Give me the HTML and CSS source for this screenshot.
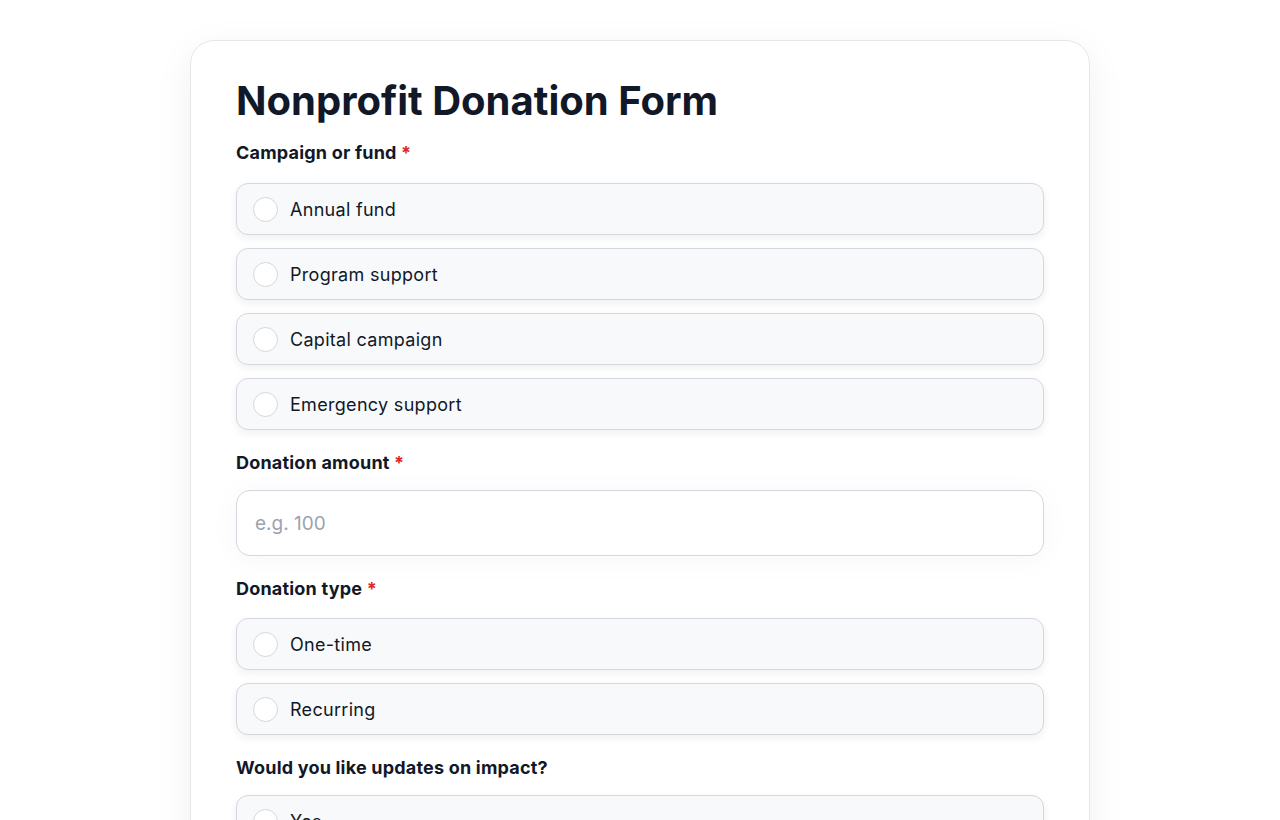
FILE: index.html
```html
<!DOCTYPE html>
<html lang="en">
<head>
  <meta charset="UTF-8" />
  <meta name="viewport" content="width=device-width, initial-scale=1.0"/>
  <title>Nonprofit Donation Form</title>
  <link rel="stylesheet" href="styles.css">
</head>
<body>
  <form class="card">
    <h1>Nonprofit Donation Form</h1>

    <div class="field">
      <div class="label">Campaign or fund <span class="req">*</span></div>
      <div class="options">
        <label class="option"><input type="radio" name="fund"><span>Annual fund</span></label>
        <label class="option"><input type="radio" name="fund"><span>Program support</span></label>
        <label class="option"><input type="radio" name="fund"><span>Capital campaign</span></label>
        <label class="option"><input type="radio" name="fund"><span>Emergency support</span></label>
      </div>
    </div>

    <div class="field">
      <label class="label label-input" for="amount">Donation amount <span class="req">*</span></label>
      <input class="text-input" id="amount" type="text" placeholder="e.g. 100">
    </div>

    <div class="field">
      <div class="label label-tight">Donation type <span class="req">*</span></div>
      <div class="options">
        <label class="option"><input type="radio" name="type"><span>One-time</span></label>
        <label class="option"><input type="radio" name="type"><span>Recurring</span></label>
      </div>
    </div>

    <div class="field">
      <div class="label label-input">Would you like updates on impact?</div>
      <div class="options">
        <label class="option"><input type="radio" name="updates"><span>Yes</span></label>
        <label class="option"><input type="radio" name="updates"><span>No</span></label>
      </div>
    </div>
  </form>
</body>
</html>
```

FILE: styles.css
```css
body {
  margin: 0;
  padding: 40px 0;
  background: #ffffff;
  font-family: Inter, "Noto Sans", sans-serif;
  color: #111827;
}

.card {
  width: 808px;
  margin: 0 auto;
  padding: 36px 45px 40px;
  background: #fff;
  border: 1px solid #e5e7eb;
  border-radius: 24px;
  box-shadow: 0 10px 40px rgba(15, 23, 42, 0.06);
}

h1 {
  margin: 0 0 16px;
  font-size: 40px;
  line-height: 48px;
  font-weight: 700;
  color: #111827;
}

.field {
  margin-bottom: 21px;
}

.label {
  display: block;
  margin-bottom: 18px;
  font-size: 18px;
  line-height: 24px;
  font-weight: 700;
  letter-spacing: 0.2px;
  color: #111827;
}

.label-tight {
  margin-bottom: 17px;
}

.label-input {
  margin-bottom: 15px;
}

.req {
  color: #dc2626;
}

.options {
  display: flex;
  flex-direction: column;
  gap: 13px;
}

.option {
  display: flex;
  align-items: center;
  gap: 12px;
  height: 50px;
  padding: 0 16px;
  background: #f8f9fb;
  border: 1px solid #d4d7de;
  border-radius: 12px;
  box-shadow: 0 3px 8px rgba(15, 23, 42, 0.07);
  font-size: 18px;
  letter-spacing: 0.3px;
  color: #111827;
  cursor: pointer;
}

.option input {
  appearance: none;
  margin: 0;
  width: 25px;
  height: 25px;
  border: 1.5px solid #d4d7de;
  border-radius: 50%;
  background: #fff;
}

.text-input {
  display: block;
  box-sizing: border-box;
  width: 100%;
  height: 66px;
  padding: 0 18px;
  border: 1px solid #d4d7de;
  border-radius: 14px;
  background: #fff;
  font-family: inherit;
  font-size: 19px;
  color: #111827;
  box-shadow: 0 4px 30px rgba(15, 23, 42, 0.04);
}

.text-input::placeholder {
  color: #9ca3af;
}
```
